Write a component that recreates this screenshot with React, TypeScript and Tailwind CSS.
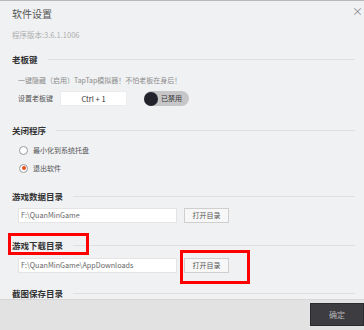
import React from "react";

const font = { fontFamily: '"Noto Sans CJK SC", "Noto Sans", sans-serif' };

const SectionTitle: React.FC<{ title: string; mt: string }> = ({ title, mt }) => (
  <div className={`flex items-center pl-3 pr-[9px] h-[12px] ${mt}`}>
    <span className="text-[8.5px] leading-[12px] font-bold text-[#333]">{title}</span>
    <div className="flex-1 h-px bg-[#dedfe1] ml-[10px]" />
  </div>
);

const PathRow: React.FC<{ path: string; mt: string }> = ({ path, mt }) => (
  <div className={`flex items-center pl-[18px] h-[15px] ${mt}`}>
    <div className="w-[159px] h-[15px] bg-white border border-[#e4e4e4] flex items-center pl-[2px] text-[7.2px] text-[#666]">
      {path}
    </div>
    <button className="ml-[7px] w-[45px] h-[15px] bg-[#f7f7f7] border border-[#cfcfcf] text-[7px] text-[#555] flex items-center justify-center">
      打开目录
    </button>
  </div>
);

const Radio: React.FC<{ label: string; checked?: boolean; mt: string }> = ({ label, checked, mt }) => (
  <div className={`flex items-center pl-[19px] h-[12px] ${mt}`}>
    <span className="w-[9px] h-[9px] rounded-full border border-[#9a9a9a] bg-white flex items-center justify-center">
      {checked && <span className="w-[4px] h-[4px] rounded-full bg-[#ee4d1f]" />}
    </span>
    <span className="ml-[5px] text-[7px] text-[#555]">{label}</span>
  </div>
);

const App: React.FC = () => {
  return (
    <div
      className="relative w-[364px] h-[330px] overflow-hidden bg-[#f0f1f3] border-t border-[#b9b9b9] flex flex-col"
      style={font}
    >
      <div className="flex-1 overflow-hidden pt-[6px]">
        <div className="flex items-center justify-between pl-3 h-[14px]">
          <span className="text-[10px] leading-[14px] text-[#555]">软件设置</span>
          <span className="text-[11px] leading-[14px] text-[#8a8a90] mr-[1px] mt-[-6px]">×</span>
        </div>
        <div className="pl-3 mt-[8px] h-[12px] text-[7.5px] leading-[12px] text-[#adadad]">
          程序版本:3.6.1.1006
        </div>

        <SectionTitle title="老板键" mt="mt-[12px]" />
        <div className="pl-[18px] mt-[10px] h-[10px] text-[7px] leading-[10px] text-[#8c8c8c]">
          一键隐藏（启用）TapTap模拟器！不怕老板在身后！
        </div>
        <div className="flex items-center pl-[18px] mt-[6px] h-[15px]">
          <span className="text-[7px] text-[#555] w-[42px]">设置老板键</span>
          <div className="w-[67px] h-[15px] bg-white border border-[#ececec] flex items-center justify-center text-[7.5px] text-[#333]">
            Ctrl + 1
          </div>
          <div className="ml-[17px] w-[45px] h-[15px] rounded-full bg-[#c6c6c8] flex items-center">
            <span className="w-[14px] h-[14px] rounded-full bg-[#23232d]" />
            <span className="ml-[3px] text-[7px] text-[#333]">已禁用</span>
          </div>
        </div>

        <SectionTitle title="关闭程序" mt="mt-[18px]" />
        <Radio label="最小化到系统托盘" mt="mt-[8px]" />
        <Radio label="退出软件" checked mt="mt-[6px]" />

        <SectionTitle title="游戏数据目录" mt="mt-[16px]" />
        <PathRow path="F:\QuanMinGame" mt="mt-[6px]" />

        <SectionTitle title="游戏下载目录" mt="mt-[16px]" />
        <PathRow path="F:\QuanMinGame\AppDownloads" mt="mt-[7px]" />

        <SectionTitle title="截图保存目录" mt="mt-[14px]" />
      </div>

      <div className="h-[31px] shrink-0 bg-[#e2e2e2] border-t border-[#d6d6d6] flex justify-end pt-[3px]">
        <button className="w-[54px] h-[23px] bg-[#3c3c41] border border-[#2a2a2e] text-[8px] text-[#b5b5b5]">
          确定
        </button>
      </div>

      <div className="absolute left-[8px] top-[232px] w-[81px] h-[22px] border-[3px] border-[#f00]" />
      <div className="absolute left-[180px] top-[249px] w-[70px] h-[34px] border-[3px] border-[#f00]" />
    </div>
  );
};

export default App;
